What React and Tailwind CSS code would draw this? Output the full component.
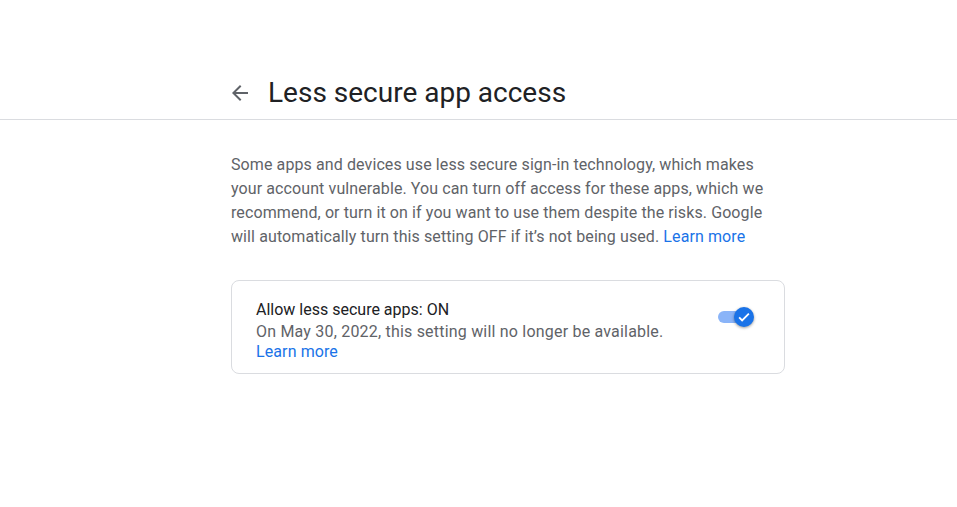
export default function App() {
  return (
    <div className="min-h-[507px] w-full bg-white" style={{ fontFamily: 'Roboto, "Liberation Sans", sans-serif' }}>
      <header className="border-b border-[#dadce0] pt-[75px] pb-[8px]">
        <div className="ml-[231px] flex w-[554px] items-center">
          <button className="-ml-[3px] mr-4 flex h-6 w-6 items-center justify-center text-[#5f6368]">
            <svg viewBox="0 0 24 24" className="h-6 w-6" fill="currentColor">
              <path d="M20 11H7.83l5.59-5.59L12 4l-8 8 8 8 1.41-1.41L7.83 13H20v-2z" />
            </svg>
          </button>
          <h1 className="text-[28px] leading-[36px] text-[#202124]">Less secure app access</h1>
        </div>
      </header>

      <main className="ml-[231px] w-[554px]">
        <p className="mt-[33px] pr-px text-[16px] leading-6 tracking-[0.1px] text-[#5f6368]">
          Some apps and devices use less secure sign-in technology, which makes your account vulnerable. You can turn off access
          for these apps, which we recommend, or turn it on if you want to use them despite the risks. Google will automatically
          turn this setting OFF if it’s not being used. <a className="text-[#1a73e8]">Learn more</a>
        </p>

        <div className="mt-[31px] flex items-start rounded-lg border border-[#dadce0] pt-[18px] pb-[11px] pl-6 pr-8">
          <div className="flex-1 text-[16px] leading-[21px]">
            <div className="text-[#202124]">Allow less secure apps: ON</div>
            <div className="mt-px tracking-[0.2px] text-[#5f6368]">On May 30, 2022, this setting will no longer be available.</div>
            <a className="-mt-px block tracking-[0.1px] text-[#1a73e8]">Learn more</a>
          </div>
          <div className="relative mt-[12px] h-[12px] w-[34px]">
            <div className="absolute left-0 top-0 h-[12px] w-[30px] rounded-full bg-[#8ab4f8]" />
            <div className="absolute -top-[4px] left-[16px] flex h-5 w-5 items-center justify-center rounded-full bg-[#1a73e8] shadow-[0_1px_3px_rgba(0,0,0,0.4)]">
              <svg viewBox="0 0 24 24" className="h-[18px] w-[18px]" fill="none" stroke="white" strokeWidth="2.4">
                <path d="M5.5 12.5l4 4L18.5 7.5" />
              </svg>
            </div>
          </div>
        </div>
      </main>
    </div>
  );
}
